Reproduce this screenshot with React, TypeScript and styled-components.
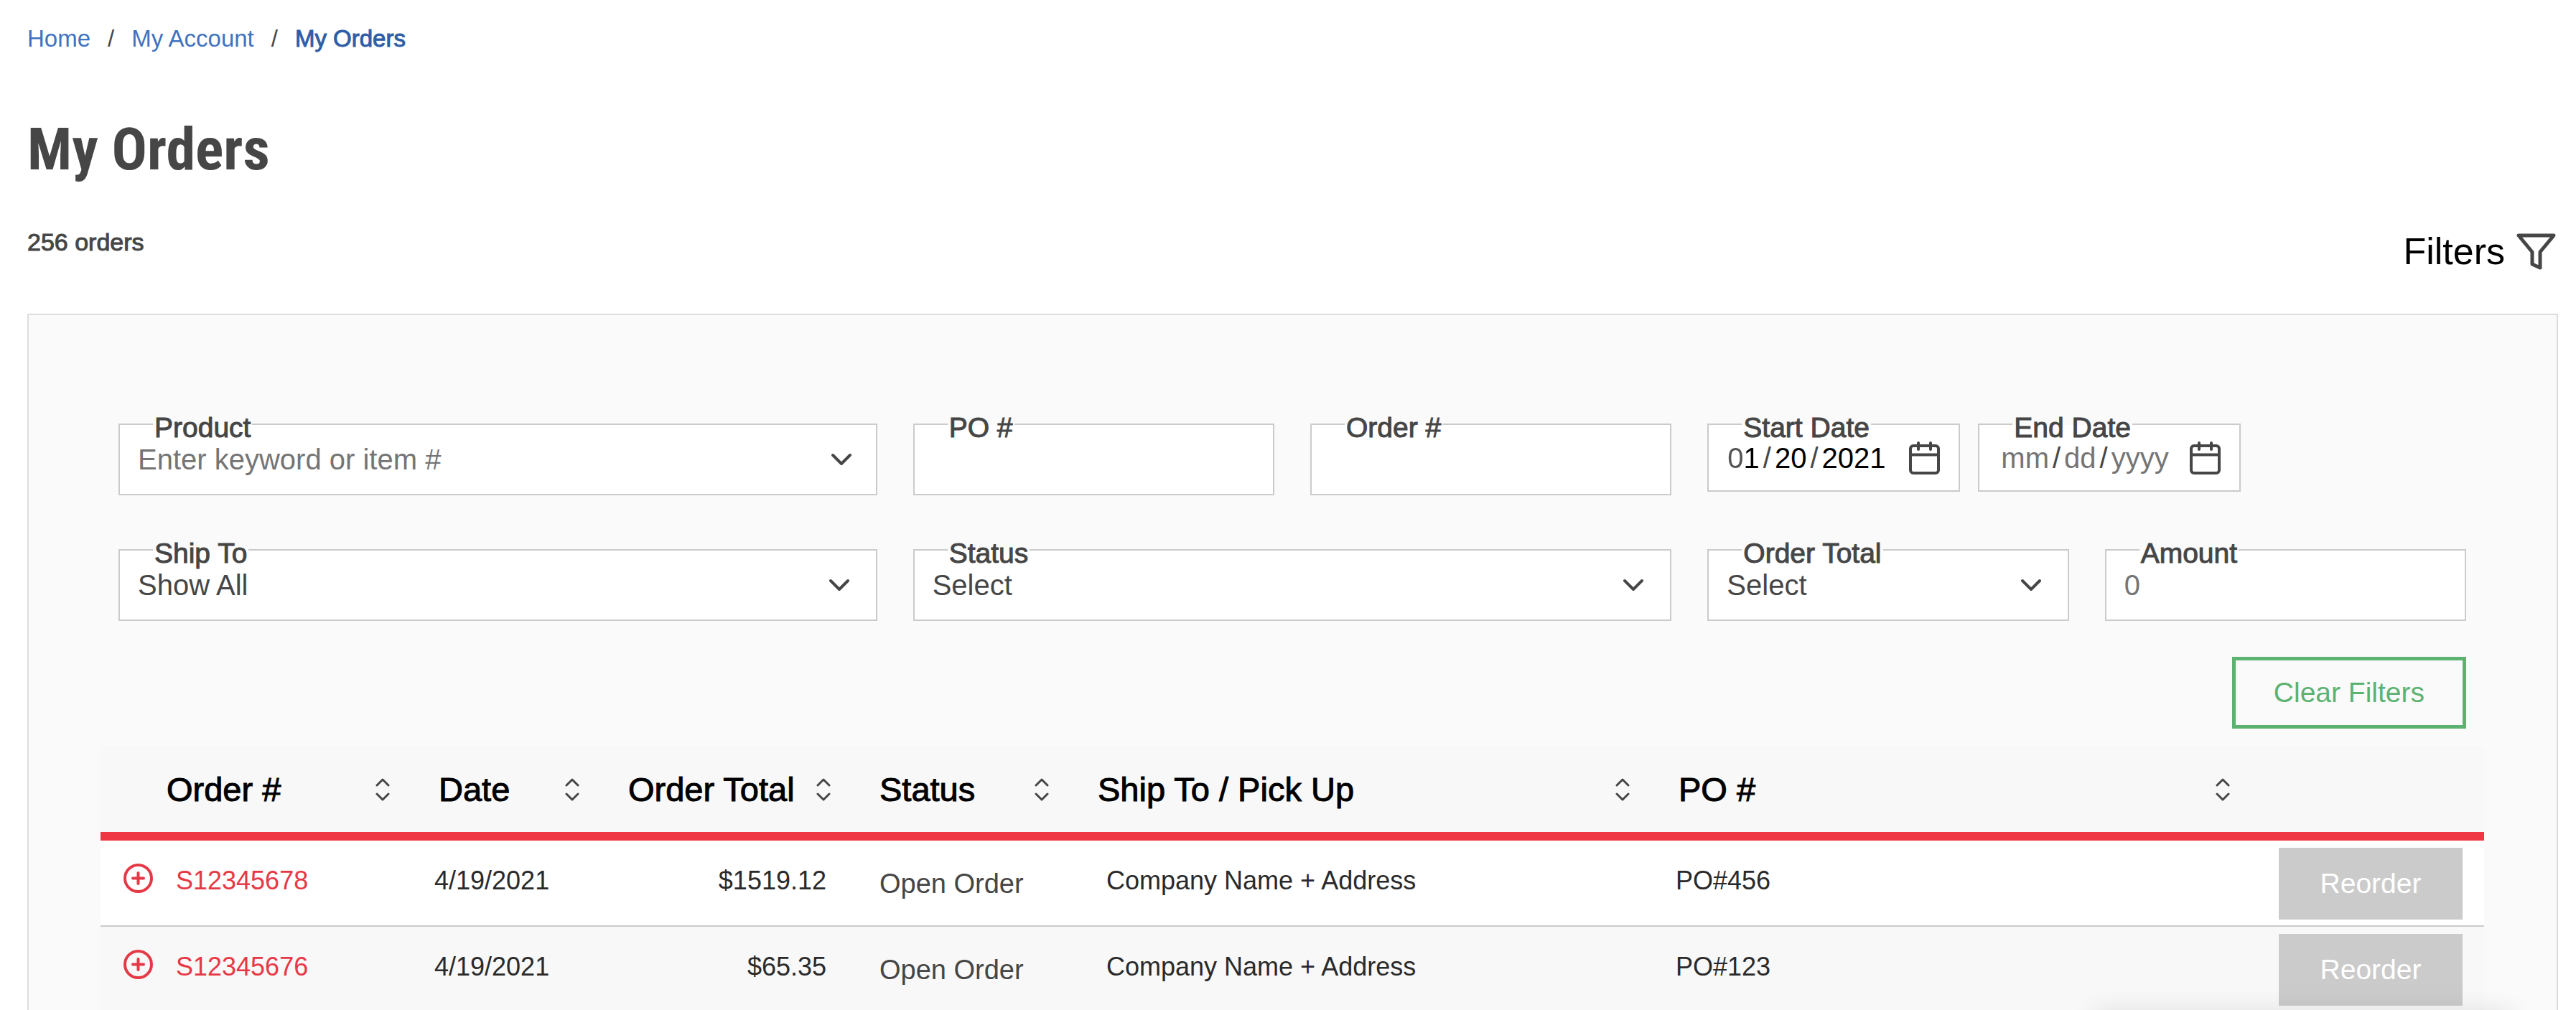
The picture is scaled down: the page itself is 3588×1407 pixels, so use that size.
import React from 'react';
import styled, { createGlobalStyle } from 'styled-components';

const GlobalStyle = createGlobalStyle`
  *, *::before, *::after { box-sizing: border-box; }
  body {
    margin: 0;
    background: #ffffff;
    color: #464646;
    font-family: "Liberation Sans", Arial, sans-serif;
    font-size: 40px;
  }
  #root { height: 100vh; overflow: hidden; }
  button, input, select { font: inherit; color: inherit; }
`;

const Page = styled.main`
  display: flex;
  flex-direction: column;
  padding: 34px 25px 0 38px;
`;

const Crumbs = styled.nav`
  ol {
    display: flex;
    margin: 0;
    padding: 0;
    list-style: none;
    font-size: 33px;
    line-height: 40px;
  }
  li + li::before {
    content: "/";
    margin: 0 24px;
    color: #464646;
  }
`;

const CrumbLink = styled.a<{ $current?: boolean }>`
  color: ${(p) => (p.$current ? '#2f5ea6' : '#3f73c0')};
  text-decoration: none;
  -webkit-text-stroke: ${(p) => (p.$current ? '1px' : '0')};
`;

const Title = styled.h1`
  margin: 86px 0 0;
  font-family: "Roboto Condensed", "Liberation Sans", sans-serif;
  font-size: 82px;
  font-weight: 700;
  line-height: 96px;
`;

const Summary = styled.div`
  display: flex;
  justify-content: space-between;
  align-items: flex-start;
  margin-top: 60px;
`;

const Count = styled.p`
  margin: 0;
  font-size: 34px;
  line-height: 42px;
  -webkit-text-stroke: 1px;
`;

const FilterToggle = styled.button`
  display: flex;
  align-items: center;
  gap: 16px;
  margin: 4px 3px 0 0;
  padding: 0;
  border: 0;
  background: none;
  color: #000000;
  font-size: 52px;
  line-height: 60px;
  svg { color: #464646; }
`;

const Panel = styled.section`
  margin-top: 57px;
  padding: 151px 101px 60px 100px;
  border: 2px solid #dddddd;
  background: #fafafa;
`;

const FilterForm = styled.form`
  display: grid;
  grid-template-columns: repeat(6, 1fr);
  gap: 75px 50px;
  padding: 0 25px;
`;

const Field = styled.div<{ $span?: number }>`
  position: relative;
  grid-column: span ${(p) => p.$span ?? 1};
`;

const FieldLabel = styled.label`
  position: absolute;
  top: -14px;
  left: 48px;
  padding: 0 2px;
  background: linear-gradient(#fafafa 16px, #ffffff 16px);
  font-size: 39px;
  line-height: 40px;
  white-space: nowrap;
  -webkit-text-stroke: 1px;
`;

const control = `
  display: block;
  width: 100%;
  height: 100px;
  margin: 0;
  padding: 0 25px;
  border: 2px solid #cbcbcb;
  border-radius: 0;
  background: #ffffff;
  appearance: none;
  outline: none;
`;

const TextBox = styled.input`
  ${control}
  &::placeholder { color: #757575; opacity: 1; }
`;

const SelectBox = styled.select`
  ${control}
`;

const IconSlot = styled.span<{ $right: number }>`
  position: absolute;
  top: 0;
  right: ${(p) => p.$right}px;
  height: 100%;
  display: flex;
  align-items: center;
  pointer-events: none;
`;

const DateGroup = styled.div`
  grid-column: span 2;
  display: flex;
  align-items: flex-start;
  gap: 25px;
`;

const DateBox = styled.input<{ $filled?: boolean }>`
  ${control}
  width: ${(p) => (p.$filled ? 352 : 366)}px;
  height: 95px;
  padding: 2px 20px 0 ${(p) => (p.$filled ? 21 : 25)}px;

  &::-webkit-datetime-edit-fields-wrapper { padding: 0; }
  &::-webkit-datetime-edit-month-field,
  &::-webkit-datetime-edit-day-field,
  &::-webkit-datetime-edit-year-field {
    min-width: 0 !important;
    width: auto !important;
    padding: 0 5px;
    color: ${(p) => (p.$filled ? '#000000' : '#757575')};
  }
  &::-webkit-datetime-edit-month-field {
    ${(p) =>
      p.$filled
        ? `background: linear-gradient(90deg, #555555 50%, #000000 50%);
           background-clip: text;
           -webkit-text-fill-color: transparent;`
        : ''}
  }
  &::-webkit-datetime-edit-text { padding: 0; }
  &::-webkit-calendar-picker-indicator { opacity: 0; }
`;

const Actions = styled.div`
  display: flex;
  justify-content: flex-end;
  margin: 50px 0 25px;
  padding: 0 25px;
`;

const ClearButton = styled.button`
  height: 100px;
  padding: 0 53px;
  border: 5px solid #5cb270;
  background: transparent;
  color: #5cb270;
  font-size: 39px;
`;

const Orders = styled.table`
  width: 100%;
  border-collapse: separate;
  border-spacing: 0;
  table-layout: fixed;
`;

const Column = styled.col<{ $width?: number }>`
  width: ${(p) => (p.$width ? `${p.$width}px` : 'auto')};
`;

const HeadRow = styled.tr`
  height: 119px;
  background: #f8f8f8;
`;

const HeadCell = styled.th<{ $first?: boolean }>`
  padding: 0 30px 0 ${(p) => (p.$first ? 92 : 38)}px;
  color: #000000;
  font-size: 47px;
  font-weight: 400;
  line-height: 56px;
  text-align: left;
  white-space: nowrap;
`;

const SortButton = styled.button`
  display: flex;
  align-items: center;
  justify-content: space-between;
  width: 100%;
  padding: 0;
  border: 0;
  background: none;
  -webkit-text-stroke: 1px;
  svg { color: #464646; }
`;

const OrderRow = styled.tr`
  &:nth-child(odd) { background: #ffffff; }
  &:nth-child(even) { background: #f8f8f8; }
  td { border-top: 2px solid #cbcbcb; }
  &:first-child td { border-top: 12px solid #ee3742; }
`;

const Cell = styled.td<{ $inset: number }>`
  padding: 10px 0 16px ${(p) => p.$inset}px;
  color: #2a2a2a;
  font-size: 36px;
  line-height: 48px;
  white-space: nowrap;
`;

const AmountCell = styled(Cell)`
  padding-right: 36px;
  text-align: right;
`;

const StatusCell = styled(Cell)`
  padding-bottom: 8px;
  color: #464646;
  font-size: 38px;
`;

const ActionCell = styled(Cell)`
  padding-bottom: 8px;
`;

const OrderCell = styled.div`
  display: flex;
  align-items: flex-start;
  gap: 32px;
`;

const ExpandButton = styled.button`
  display: flex;
  padding: 0;
  border: 0;
  background: none;
  color: #e63946;
`;

const OrderLink = styled.a`
  color: #e63946;
  text-decoration: none;
`;

const ReorderButton = styled.button`
  display: block;
  width: 256px;
  height: 100px;
  padding: 0;
  border: 0;
  background: #cbcbcb;
  color: #ffffff;
  font-size: 39px;
`;

const DockedWidget = styled.div`
  position: fixed;
  right: 90px;
  bottom: -26px;
  width: 580px;
  height: 20px;
  box-shadow: 0 0 36px rgba(0, 0, 0, 0.16);
`;

const Chevron = ({ right = 39 }: { right?: number }) => (
  <IconSlot $right={right}>
    <svg width="28" height="18" viewBox="0 0 28 18" fill="none" stroke="#464646" strokeWidth="4" strokeLinecap="round" strokeLinejoin="round" aria-hidden="true">
      <path d="M2 3l12 12L26 3" />
    </svg>
  </IconSlot>
);

const CalendarIcon = () => (
  <IconSlot $right={28}>
    <svg width="43" height="46" viewBox="0 0 43 46" fill="none" stroke="#464646" strokeWidth="4" strokeLinecap="round" aria-hidden="true">
      <rect x="2" y="6" width="39" height="38" rx="4" />
      <path d="M2 18.500h39M13 2v9M30 2v9" />
    </svg>
  </IconSlot>
);

const FunnelIcon = () => (
  <svg width="55" height="51" viewBox="0 0 55 51" fill="none" stroke="currentColor" strokeWidth="5" strokeLinejoin="round" aria-hidden="true">
    <path d="M3 3h49L33 26v22l-11-5V26z" />
  </svg>
);

const SortIcon = () => (
  <svg width="20" height="32" viewBox="0 0 20 32" fill="none" stroke="currentColor" strokeWidth="3" strokeLinecap="round" strokeLinejoin="round" aria-hidden="true">
    <path d="M2 10l8-8 8 8M2 22l8 8 8-8" />
  </svg>
);

const PlusIcon = () => (
  <svg width="41" height="41" viewBox="0 0 41 41" fill="none" stroke="currentColor" strokeWidth="4" strokeLinecap="round" aria-hidden="true">
    <circle cx="20.500" cy="20.500" r="18.500" />
    <path d="M20.500 13v15M13 20.500h15" />
  </svg>
);

const COLUMNS = [
  { label: 'Order #', width: 433 },
  { label: 'Date', width: 264 },
  { label: 'Order Total', width: 350 },
  { label: 'Status', width: 304 },
  { label: 'Ship To / Pick Up', width: 809 },
  { label: 'PO #', width: undefined },
];

const ORDERS = [
  { id: 'S12345678', date: '4/19/2021', total: '$1519.12', status: 'Open Order', shipTo: 'Company Name + Address', po: 'PO#456' },
  { id: 'S12345676', date: '4/19/2021', total: '$65.35', status: 'Open Order', shipTo: 'Company Name + Address', po: 'PO#123' },
];

const SelectField = ({ id, label, option, span }: { id: string; label: string; option: string; span?: number }) => (
  <Field $span={span}>
    <SelectBox id={id}>
      <option>{option}</option>
    </SelectBox>
    <FieldLabel htmlFor={id}>{label}</FieldLabel>
    <Chevron />
  </Field>
);

const TextField = ({ id, label, placeholder, span, chevron }: { id: string; label: string; placeholder?: string; span?: number; chevron?: boolean }) => (
  <Field $span={span}>
    <TextBox id={id} type="text" placeholder={placeholder} />
    <FieldLabel htmlFor={id}>{label}</FieldLabel>
    {chevron && <Chevron right={36} />}
  </Field>
);

const DateField = ({ id, label, value }: { id: string; label: string; value?: string }) => (
  <Field>
    <DateBox id={id} type="date" defaultValue={value} $filled={Boolean(value)} />
    <FieldLabel htmlFor={id}>{label}</FieldLabel>
    <CalendarIcon />
  </Field>
);

export default function App() {
  return (
    <>
      <GlobalStyle />
      <Page>
        <Crumbs aria-label="Breadcrumb">
          <ol>
            <li><CrumbLink href="#home">Home</CrumbLink></li>
            <li><CrumbLink href="#account">My Account</CrumbLink></li>
            <li><CrumbLink href="#orders" $current aria-current="page">My Orders</CrumbLink></li>
          </ol>
        </Crumbs>
        <Title>My Orders</Title>
        <Summary>
          <Count>256 orders</Count>
          <FilterToggle type="button">
            Filters
            <FunnelIcon />
          </FilterToggle>
        </Summary>
        <Panel>
          <FilterForm>
            <TextField id="product" label="Product" placeholder="Enter keyword or item #" span={2} chevron />
            <TextField id="po" label="PO #" />
            <TextField id="order" label="Order #" />
            <DateGroup>
              <DateField id="start" label="Start Date" value="2021-01-20" />
              <DateField id="end" label="End Date" />
            </DateGroup>
            <SelectField id="shipto" label="Ship To" option="Show All" span={2} />
            <SelectField id="status" label="Status" option="Select" span={2} />
            <SelectField id="total" label="Order Total" option="Select" />
            <TextField id="amount" label="Amount" placeholder="0" />
          </FilterForm>
          <Actions>
            <ClearButton type="button">Clear Filters</ClearButton>
          </Actions>
          <Orders>
            <colgroup>
              {COLUMNS.map((c) => <Column key={c.label} $width={c.width} />)}
              <Column $width={324} />
            </colgroup>
            <thead>
              <HeadRow>
                {COLUMNS.map((c, i) => (
                  <HeadCell key={c.label} scope="col" $first={i === 0}>
                    <SortButton type="button">
                      {c.label}
                      <SortIcon />
                    </SortButton>
                  </HeadCell>
                ))}
                <td />
              </HeadRow>
            </thead>
            <tbody>
              {ORDERS.map((o) => (
                <OrderRow key={o.id}>
                  <Cell $inset={32}>
                    <OrderCell>
                      <ExpandButton type="button" aria-label={`Expand ${o.id}`}><PlusIcon /></ExpandButton>
                      <OrderLink href={`#${o.id}`}>{o.id}</OrderLink>
                    </OrderCell>
                  </Cell>
                  <Cell $inset={32}>{o.date}</Cell>
                  <AmountCell $inset={32}>{o.total}</AmountCell>
                  <StatusCell $inset={38}>{o.status}</StatusCell>
                  <Cell $inset={50}>{o.shipTo}</Cell>
                  <Cell $inset={34}>{o.po}</Cell>
                  <ActionCell $inset={38}><ReorderButton type="button">Reorder</ReorderButton></ActionCell>
                </OrderRow>
              ))}
            </tbody>
          </Orders>
        </Panel>
      </Page>
      <DockedWidget />
    </>
  );
}
